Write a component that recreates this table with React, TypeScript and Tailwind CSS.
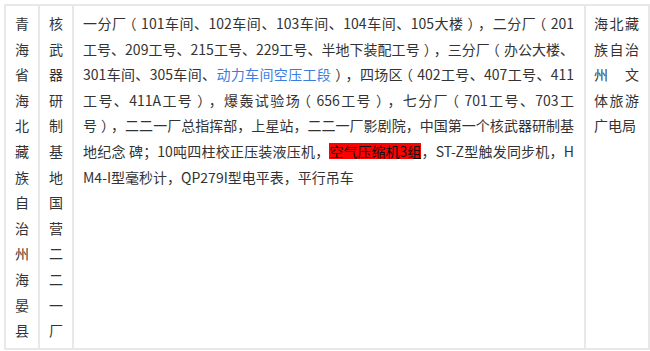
import type { ReactNode } from 'react'

// the reference font sets fullwidth parens nearer the middle of their box:
// take the half-width form and pad it back out to a full em
function cjk(text: string): ReactNode[] {
  return text.split(/([（）])/).map((part, i) => {
    if (part === '（')
      return <span key={i} className="pl-[3px] pr-[4px] [font-feature-settings:'halt']">{part}</span>
    if (part === '）')
      return <span key={i} className="pl-[4px] pr-[3px] [font-feature-settings:'halt']">{part}</span>
    return part
  })
}

function VerticalCell({ text }: { text: string }) {
  return (
    <td className="w-[34px] border-2 border-[#e8e8e8] px-[8px] pt-[5px] pb-[4px] align-top text-center">
      {text.split('').map((ch, i) => (
        <div key={i}>{ch}</div>
      ))}
    </td>
  )
}

export default function App() {
  const justified = 'block text-justify [text-align-last:justify]'
  return (
    <div className="w-[650px] h-[351px] bg-white pt-[4px] pl-[4px] font-['Noto_Sans_CJK_SC','Noto_Sans',sans-serif] text-[14px] leading-[25.6px] text-[#333]">
      <table className="w-[644px] border-collapse table-fixed">
        <colgroup>
          <col className="w-[34px]" />
          <col className="w-[34px]" />
          <col className="w-[512px]" />
          <col className="w-[64px]" />
        </colgroup>
        <tbody>
          <tr>
            <VerticalCell text="青海省海北藏族自治州海晏县" />
            <VerticalCell text="核武器研制基地国营二二一厂" />
            <td className="border-2 border-[#e8e8e8] pl-[9px] pr-[10px] pt-[5px] pb-[4px] align-top">
              <span className={justified}>{cjk('一分厂（101车间、102车间、103车间、104车间、105大楼），二分厂（201')}</span>
              <span className={justified}>{cjk('工号、209工号、215工号、229工号、半地下装配工号），三分厂（办公大楼、')}</span>
              <span className={justified}>
                301车间、305车间、<span className="text-[#3b7ddf]">动力车间空压工段</span>
                {cjk('），四场区（402工号、407工号、411')}
              </span>
              <span className={justified}>{cjk('工号、411A工号），爆轰试验场（656工号），七分厂（701工号、703工')}</span>
              <span className={justified}>{cjk('号），二二一厂总指挥部，上星站，二二一厂影剧院，中国第一个核武器研制基')}</span>
              <span className={justified}>
                地纪念 碑；10吨四柱校正压装液压机，
                <span className="inline-block bg-[#ff0000] leading-[16px] text-[#111]">空气压缩机3组</span>
                ，ST-Z型触发同步机，H
              </span>
              <span className="block">M4-I型毫秒计，QP279I型电平表，平行吊车</span>
            </td>
            <td className="border-2 border-[#e8e8e8] pl-[8px] pr-[9px] pt-[5px] pb-[4px] align-top text-justify">
              海北藏族自治州 文体旅游广电局
            </td>
          </tr>
        </tbody>
      </table>
    </div>
  )
}
